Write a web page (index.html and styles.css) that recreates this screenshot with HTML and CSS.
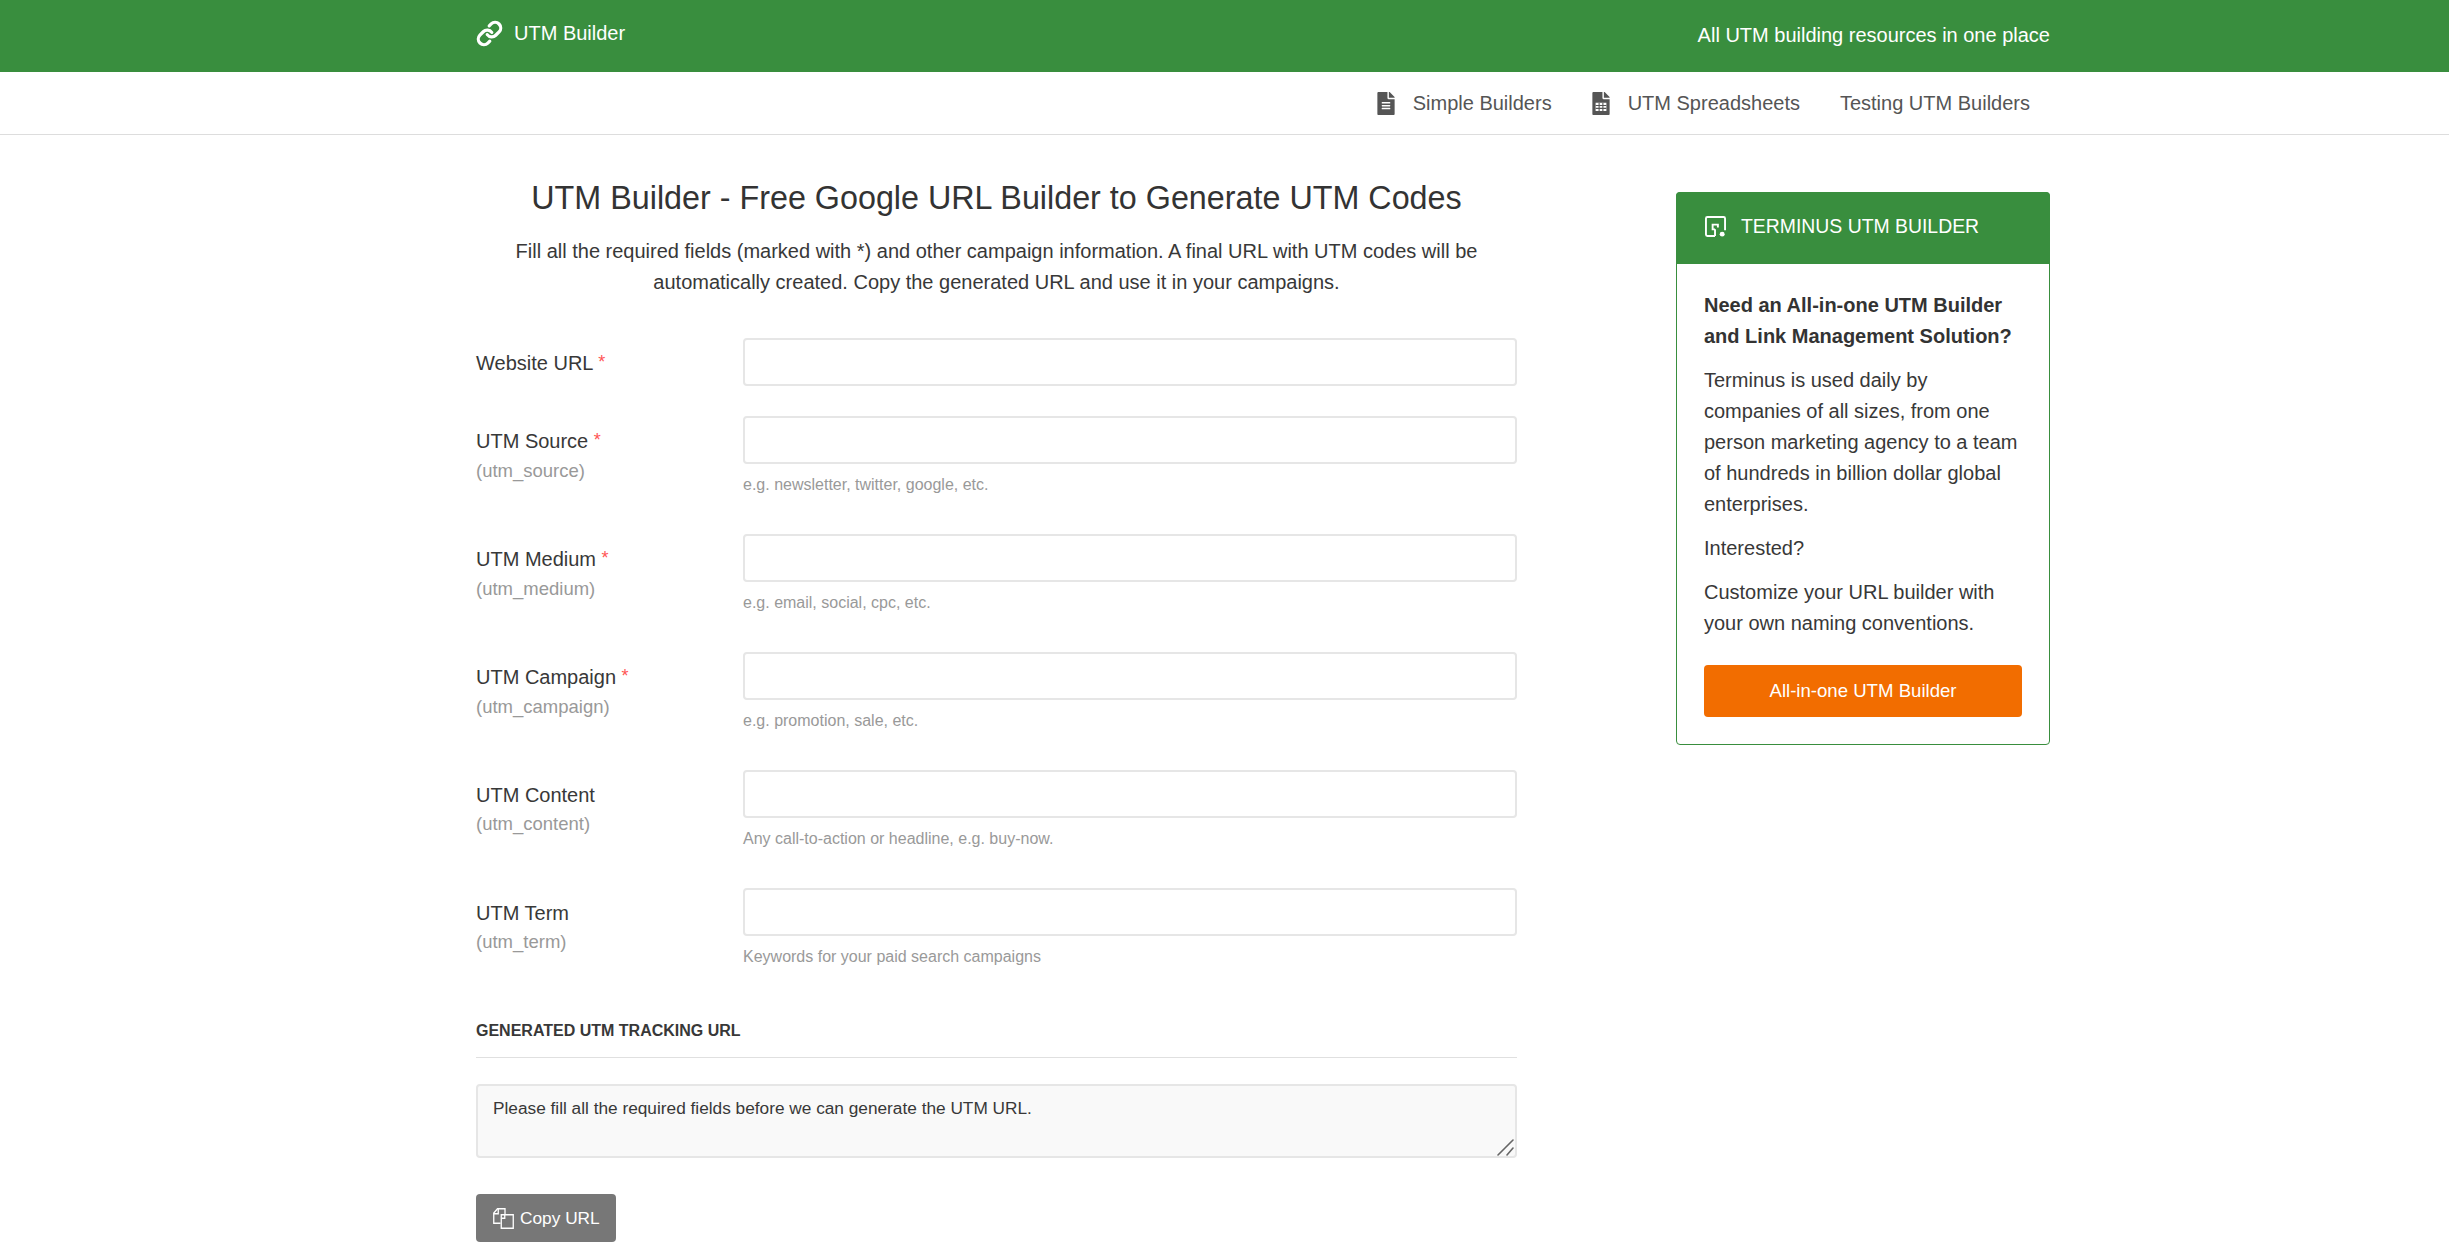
FILE: index.html
```html
<!DOCTYPE html>
<html lang="en">
<head>
    <meta charset="UTF-8">
    <meta name="viewport" content="width=device-width, initial-scale=1.0">
    <title>UTM Builder</title>
    <link rel="stylesheet" href="styles.css">
</head>
<body>
    <header class="topbar">
        <div class="container topbar-inner">
            <a class="brand" href="#">
                <svg class="brand-icon" viewBox="0 0 24 24" fill="none" stroke="currentColor" stroke-width="2.9" stroke-linecap="round" stroke-linejoin="round"><path d="M10 13a5 5 0 0 0 7.54.54l3-3a5 5 0 0 0-7.07-7.07l-1.72 1.71"/><path d="M14 11a5 5 0 0 0-7.54-.54l-3 3a5 5 0 0 0 7.07 7.07l1.71-1.71"/></svg>
                <span>UTM Builder</span>
            </a>
            <div class="tagline">All UTM building resources in one place</div>
        </div>
    </header>

    <nav class="subnav">
        <div class="container subnav-inner">
            <a href="#">
                <svg class="nav-icon" viewBox="0 0 384 512"><path fill="currentColor" d="M224 136V0H24C10.7 0 0 10.7 0 24v464c0 13.3 10.7 24 24 24h336c13.3 0 24-10.7 24-24V160H248c-13.2 0-24-10.8-24-24zm64 236c0 6.6-5.4 12-12 12H108c-6.6 0-12-5.4-12-12v-8c0-6.6 5.4-12 12-12h168c6.6 0 12 5.4 12 12v8zm0-64c0 6.6-5.4 12-12 12H108c-6.6 0-12-5.4-12-12v-8c0-6.6 5.4-12 12-12h168c6.6 0 12 5.4 12 12v8zm0-72v8c0 6.6-5.4 12-12 12H108c-6.6 0-12-5.4-12-12v-8c0-6.6 5.4-12 12-12h168c6.6 0 12 5.4 12 12zm96-114.1v6.1H256V0h6.1c6.4 0 12.5 2.5 17 7l97.9 98c4.5 4.5 7 10.6 7 16.9z"/></svg>
                Simple Builders
            </a>
            <a href="#">
                <svg class="nav-icon" viewBox="0 0 384 512"><path fill="currentColor" fill-rule="evenodd" d="M224 136V0H24C10.7 0 0 10.7 0 24v464c0 13.3 10.7 24 24 24h336c13.3 0 24-10.7 24-24V160H248c-13.2 0-24-10.8-24-24zM72 240h240v184H72zm312-118.100v6.100H256V0h6.100c6.400 0 12.500 2.500 17 7l97.900 98c4.500 4.500 7 10.600 7 16.900z"/><path fill="currentColor" d="M138 240h24v184h-24zM222 240h24v184h-24zM72 288h240v24H72zM72 352h240v24H72z"/></svg>
                UTM Spreadsheets
            </a>
            <a href="#">Testing UTM Builders</a>
        </div>
    </nav>

    <main class="container page">
        <section class="builder">
            <h1>UTM Builder - Free Google URL Builder to Generate UTM Codes</h1>
            <p class="intro">Fill all the required fields (marked with *) and other campaign information. A final URL with UTM codes will be automatically created. Copy the generated URL and use it in your campaigns.</p>

            <form class="utm-form">
                <div class="field field-plain">
                    <label for="url">Website URL <span class="req">*</span></label>
                    <div class="control"><input type="text" id="url"></div>
                </div>
                <div class="field">
                    <label for="source">UTM Source <span class="req">*</span><small>(utm_source)</small></label>
                    <div class="control"><input type="text" id="source"><p class="hint">e.g. newsletter, twitter, google, etc.</p></div>
                </div>
                <div class="field">
                    <label for="medium">UTM Medium <span class="req">*</span><small>(utm_medium)</small></label>
                    <div class="control"><input type="text" id="medium"><p class="hint">e.g. email, social, cpc, etc.</p></div>
                </div>
                <div class="field">
                    <label for="campaign">UTM Campaign <span class="req">*</span><small>(utm_campaign)</small></label>
                    <div class="control"><input type="text" id="campaign"><p class="hint">e.g. promotion, sale, etc.</p></div>
                </div>
                <div class="field">
                    <label for="content">UTM Content<small>(utm_content)</small></label>
                    <div class="control"><input type="text" id="content"><p class="hint">Any call-to-action or headline, e.g. buy-now.</p></div>
                </div>
                <div class="field">
                    <label for="term">UTM Term<small>(utm_term)</small></label>
                    <div class="control"><input type="text" id="term"><p class="hint">Keywords for your paid search campaigns</p></div>
                </div>

                <h2 class="result-title">GENERATED UTM TRACKING URL</h2>
                <div class="result-wrap">
                    <textarea class="result" readonly>Please fill all the required fields before we can generate the UTM URL.</textarea>
                    <svg class="grip" viewBox="0 0 18 17" stroke="#666" stroke-width="1.6" stroke-linecap="round"><path d="M1 16L16 1M10 16L16 9"/></svg>
                </div>
                <button type="button" class="copy-btn">
                    <svg class="copy-icon" viewBox="0 0 21 21" fill="none" stroke="currentColor" stroke-width="1.3"><path d="M7.500 15.250H.75V5L4.500 .75H12V6"/><path d="M.75 5.750H5.250V.75"/><path d="M8.250 6.750H20.250V20.250H8.250Z"/><path d="M8.250 10.250H11.750V6.750"/></svg>
                    Copy URL
                </button>
            </form>
        </section>

        <aside class="promo">
            <div class="promo-head">
                <svg class="promo-icon" viewBox="0 0 22 22" fill="none" stroke="currentColor" stroke-width="2"><path d="M10.500 21H2.500A1.500 1.500 0 0 1 1 19.500V2.500A1.500 1.500 0 0 1 2.500 1H19.500A1.500 1.500 0 0 1 21 2.500V15"/><path d="M10.500 21V14"/><path d="M10.500 14H8V9H13.500V12"/><circle cx="18" cy="19" r="2.600" fill="currentColor" stroke="none"/></svg>
                <span>TERMINUS UTM BUILDER</span>
            </div>
            <div class="promo-body">
                <p class="promo-lead">Need an All-in-one UTM Builder and Link Management Solution?</p>
                <p>Terminus is used daily by companies of all sizes, from one person marketing agency to a team of hundreds in billion dollar global enterprises.</p>
                <p>Interested?</p>
                <p>Customize your URL builder with your own naming conventions.</p>
                <a class="promo-btn" href="#">All-in-one UTM Builder</a>
            </div>
        </aside>
    </main>
</body>
</html>
```
FILE: styles.css
```css
* {
    box-sizing: border-box;
}
body {
    margin: 0;
    font-family: "Liberation Sans", Arial, sans-serif;
    font-size: 18px;
    color: #383838;
    background-color: #fff;
}
a {
    text-decoration: none;
}
.container {
    width: 1575px;
    margin-left: 476px;
}
.topbar {
    height: 72px;
    background-color: #398e3e;
    color: #fff;
}
.topbar-inner {
    display: flex;
    justify-content: space-between;
    align-items: center;
    height: 72px;
}
.brand {
    display: flex;
    align-items: center;
    gap: 11px;
    color: #fff;
    font-size: 20px;
    margin-top: -5px;
}
.brand-icon {
    width: 27px;
    height: 27px;
}
.tagline {
    font-size: 20px;
    margin-top: -2px;
    margin-right: 1px;
}
.subnav {
    height: 63px;
    border-bottom: 1px solid #ddd;
}
.subnav-inner {
    display: flex;
    justify-content: flex-end;
    align-items: center;
    gap: 40px;
    height: 62px;
    padding-right: 21px;
}
.subnav a {
    display: flex;
    align-items: center;
    color: #555;
    font-size: 20px;
}
.nav-icon {
    width: 18px;
    height: 23px;
    margin-right: 18px;
}
.page {
    display: flex;
    justify-content: space-between;
    align-items: flex-start;
    padding-top: 43px;
}
.builder {
    width: 1041px;
}
h1 {
    margin: 0 0 18px;
    font-size: 32.3px;
    font-weight: 400;
    line-height: 40px;
    text-align: center;
    color: #333;
}
.intro {
    margin: 0 20px 40px;
    font-size: 20px;
    line-height: 31px;
    text-align: center;
}
.field {
    display: flex;
    height: 118px;
}
.field-plain {
    height: 78px;
}
.field label {
    width: 267px;
    padding-top: 10px;
    font-size: 20px;
    line-height: 30px;
}
.field small {
    display: block;
    margin-top: -1px;
    font-size: 18.5px;
    color: #999;
}
.req {
    color: #f55;
    font-size: 18px;
    position: relative;
    top: -2px;
}
.control {
    flex: 1;
}
.control input {
    display: block;
    width: 100%;
    height: 48px;
    border: 2px solid #e6e6e6;
    border-radius: 4px;
    background: #fff;
}
.hint {
    margin: 10px 0 0;
    font-size: 16px;
    line-height: 22px;
    color: #999;
}
.result-title {
    margin: 13px 0 26px;
    padding-bottom: 14px;
    border-bottom: 1px solid #e0e0e0;
    font-size: 16px;
    font-weight: 700;
    line-height: 24px;
}
.result-wrap {
    position: relative;
    margin-bottom: 36px;
}
.result {
    display: block;
    width: 100%;
    height: 74px;
    padding: 12px 15px;
    border: 2px solid #e6e6e6;
    border-radius: 4px;
    background-color: #f9f9f9;
    color: #383838;
    font-family: "Liberation Sans", Arial, sans-serif;
    font-size: 17.25px;
    line-height: 20px;
    resize: none;
}
.grip {
    position: absolute;
    right: 2px;
    bottom: 2px;
    width: 18px;
    height: 17px;
}
.copy-btn {
    display: flex;
    align-items: center;
    gap: 6px;
    height: 48px;
    padding: 0 16px 0 17px;
    border: 0;
    border-radius: 4px;
    background-color: #777;
    color: #fff;
    font-family: "Liberation Sans", Arial, sans-serif;
    font-size: 17.3px;
}
.copy-icon {
    width: 21px;
    height: 21px;
}
.promo {
    width: 374px;
    margin: 14px 1px 0 0;
    border: 1px solid #398e3e;
    border-radius: 4px;
}
.promo-head {
    display: flex;
    align-items: center;
    gap: 15px;
    height: 72px;
    margin: -1px -1px 0;
    padding: 0 0 4px 29px;
    border-radius: 4px 4px 0 0;
    background-color: #398e3e;
    color: #fff;
    font-size: 19.4px;
}
.promo-icon {
    width: 21px;
    height: 21px;
}
.promo-body {
    padding: 26px 27px 27px;
    font-size: 20px;
    line-height: 31px;
}
.promo-body p {
    margin: 0 0 13px;
}
.promo-lead {
    font-weight: 700;
    color: #333;
}
.promo-btn {
    display: block;
    height: 52px;
    margin-top: 26px;
    border-radius: 4px;
    background-color: #f26d00;
    color: #fff;
    font-size: 18.6px;
    line-height: 52px;
    text-align: center;
}
```
